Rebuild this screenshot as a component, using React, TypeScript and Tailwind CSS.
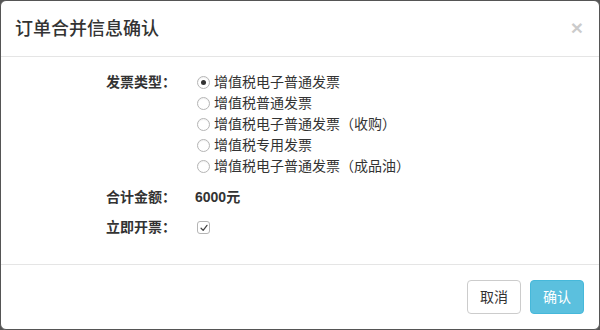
import { useState } from "react";

const invoiceTypes = [
  "增值税电子普通发票",
  "增值税普通发票",
  "增值税电子普通发票（收购）",
  "增值税专用发票",
  "增值税电子普通发票（成品油）",
];

function Radio({ checked }: { checked: boolean }) {
  return (
    <span className="h-[13px] w-[13px] shrink-0 rounded-full border border-[#b5b5b5] bg-white flex items-center justify-center shadow-[inset_0_1px_1px_rgba(0,0,0,0.06)]">
      {checked && <span className="h-[5px] w-[5px] rounded-full bg-[#333]" />}
    </span>
  );
}

export default function App() {
  const [type, setType] = useState(0);
  const [now, setNow] = useState(true);

  return (
    <div
      className="w-[600px] h-[330px] bg-[#555] text-[#333]"
      style={{ fontFamily: '"Liberation Sans", "Noto Sans CJK SC", sans-serif' }}
    >
      <div className="h-full rounded-[6px] border border-[#555] bg-white flex flex-col overflow-hidden">
        {/* 标题 */}
        <div className="h-[56px] shrink-0 border-b border-[#e5e5e5] px-[14px] flex items-center justify-between">
          <h4 className="text-[18px] leading-[26px] font-medium text-[#333]">订单合并信息确认</h4>
          <button className="text-[21px] leading-none font-bold text-black opacity-20 pr-[2px] mb-[2px]">×</button>
        </div>

        <div className="flex-1 pt-[15px] pl-[105px] text-[14px]">
          <div className="flex">
            <label className="w-[91px] shrink-0 font-bold leading-[21px]">发票类型：</label>
            <div className="flex flex-col">
              {invoiceTypes.map((t, i) => (
                <button
                  key={t}
                  onClick={() => setType(i)}
                  className="h-[21px] flex items-center gap-[4px] text-left"
                >
                  <Radio checked={type === i} />
                  <span>{t}</span>
                </button>
              ))}
            </div>
          </div>

          <div className="flex mt-[10px]">
            <label className="w-[91px] shrink-0 font-bold leading-[21px]">合计金额：</label>
            <span className="font-bold leading-[21px] -ml-[2px]">6000元</span>
          </div>

          <div className="flex mt-[9px]">
            <label className="w-[91px] shrink-0 font-bold leading-[21px]">立即开票：</label>
            <button
              onClick={() => setNow(!now)}
              className="h-[21px] flex items-center"
            >
              <span className="h-[13px] w-[13px] rounded-[3px] border border-[#b5b5b5] bg-white flex items-center justify-center">
                {now && (
                  <svg viewBox="0 0 12 12" className="h-[10px] w-[10px]">
                    <path d="M2.5 6.3 L5 8.8 L9.6 2.8" fill="none" stroke="#444" strokeWidth="1.5" strokeLinecap="round" strokeLinejoin="round" />
                  </svg>
                )}
              </span>
            </button>
          </div>
        </div>

        {/* 底部按钮 */}
        <div className="h-[65px] shrink-0 border-t border-[#e5e5e5] px-[15px] flex items-center justify-end gap-[9px]">
          <button className="h-[34px] px-[12px] rounded-[4px] border border-[#ccc] bg-white text-[14px] text-[#333]">取消</button>
          <button className="h-[34px] px-[12px] rounded-[4px] border border-[#46b8da] bg-[#5bc0de] text-[14px] text-white">确认</button>
        </div>
      </div>
    </div>
  );
}
